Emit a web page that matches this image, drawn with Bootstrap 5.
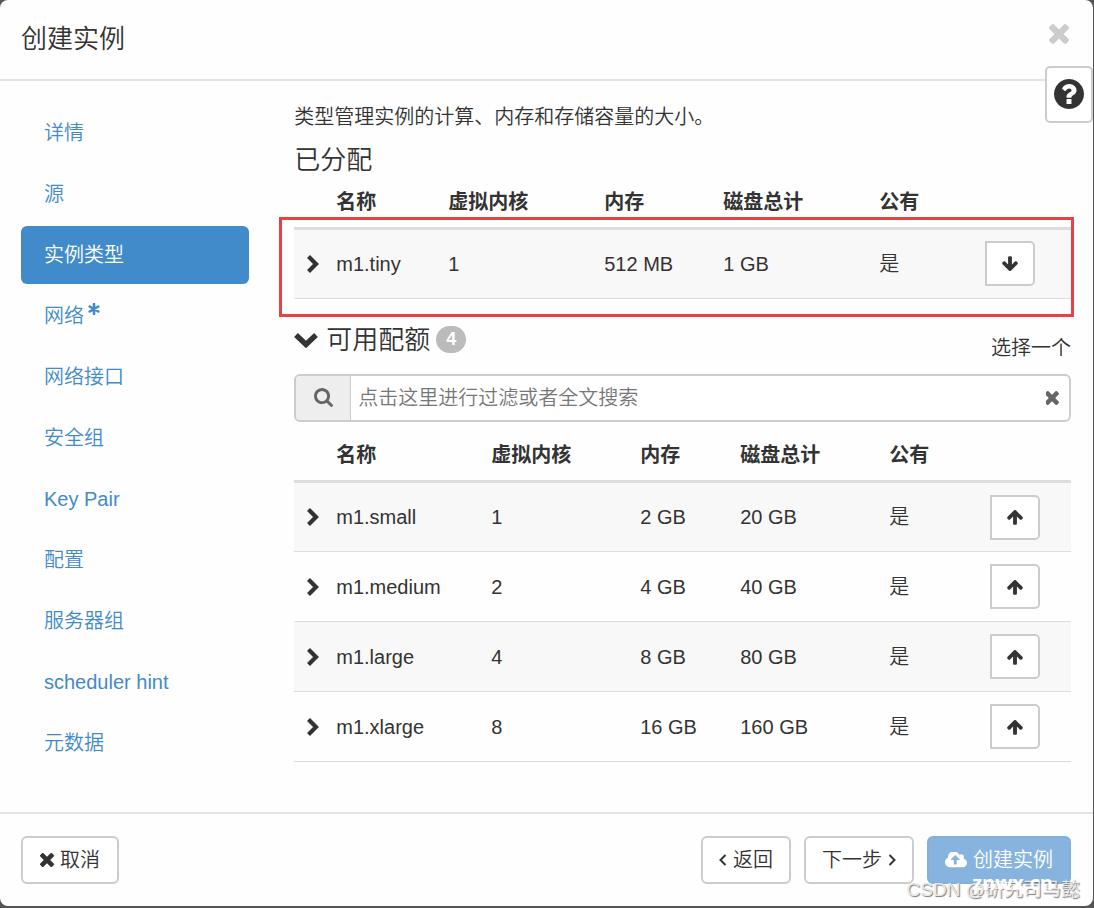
<!DOCTYPE html>
<html lang="zh-CN">
<head>
<meta charset="utf-8">
<meta name="viewport" content="width=device-width, initial-scale=1">
<title>创建实例</title>
<link href="https://cdn.jsdelivr.net/npm/bootstrap@5.3.0/dist/css/bootstrap.min.css" rel="stylesheet">
<style>
  body { font-family: "Liberation Sans", "Noto Sans CJK SC", sans-serif; font-size: 20px; font-weight: 350; line-height: 28px; color: #333; background: #555; }
  .wizard { background: #fefefe; border-radius: 8px; margin: 0 1px 2px 0; min-height: calc(100vh - 2px); }
  .wizard-head { padding: 20px 21px; border-bottom: 2px solid #e3e3e3; }
  .title { font-size: 26px; line-height: 39px; font-weight: 350; }
  .icon { fill: currentColor; display: inline-block; flex: none; }
  .line-icon { fill: none; stroke: currentColor; }
  .plain { background: none; border: 0; padding: 0; color: inherit; line-height: 1; display: inline-flex; }
  .dismiss { color: #ccc; margin: 0 3px 12px 0; }
  .help { position: absolute; top: 66px; right: 0; width: 48px; height: 57px; background: #fff; border: 2px solid #ccc; border-radius: 5px; padding: 0 0 2px; color: #333; }
  .steps { padding: 23px 24px 20px 21px; }
  .steps .nav { gap: 3px; }
  .steps .nav-link { color: #428bca; padding: 15px 23px; border-radius: 6px; }
  .steps .nav-link.active { background: #428bca; color: #fff; }
  .required { vertical-align: 8px; margin-left: 4px; }
  .content { padding: 22px 22px 20px 21px; }
  .subtitle { font-size: 26px; line-height: 36px; font-weight: 350; }
  .assigned { margin: 11px 0 0; }
  .flavors { table-layout: fixed; margin: 0; color: #333; --bs-table-color: #333; --bs-table-striped-color: #333; --bs-table-striped-bg: #f8f8f8; --bs-table-bg: transparent; border-color: #ddd; line-height: 28px; }
  .flavors > :not(caption) > * > * { padding: 0 11px; height: 70px; white-space: nowrap; vertical-align: middle; }
  .flavors > thead > tr > th { font-weight: 700; border-bottom: 3px solid #ddd; }
  .allocated > thead > tr > th { height: 50px; vertical-align: top; padding-top: 10px; }
  .available > thead > tr > th { height: 60px; padding-top: 8px; }
  .flavors > tbody > tr > td:first-child { padding: 0 0 3px 13px; }
  .flavors .plain { vertical-align: middle; }
  .move { display: flex; align-items: center; justify-content: center; width: 50px; height: 45px; background: #fff; border: 2px solid #ccc; border-radius: 0 5px 5px 0; color: #333; padding: 0; }
  .callout { position: relative; }
  .callout::after { content: ""; position: absolute; inset: 39px -3px -18px -15px; border: 3px solid #e84143; pointer-events: none; }
  .available-head { padding-top: 23px; margin-bottom: 12px; }
  .choose { padding-top: 12px; }
  .count { background: #bbb; color: #fff; font-size: 18px; line-height: 27px; border-radius: 14px; padding: 0 10px; font-weight: 700; margin-left: 6px; }
  .search { border: 2px solid #ccc; border-radius: 6px; height: 48px; background: #fff; overflow: hidden; }
  .search .input-group-text { width: 56px; background: #eee; border: 0; border-right: 2px solid #ccc; border-radius: 0; color: #666; justify-content: center; padding: 0; }
  .search .form-control { border: 0; padding: 0 7px; font-size: 20px; font-weight: 350; box-shadow: none; min-width: 0; }
  .search .form-control::placeholder { color: #777; }
  .clear { color: #666; padding-right: 10px; }
  .wizard-foot { border-top: 2px solid #e3e3e3; padding: 22px; padding-left: 21px; }
  .wizard-foot .btn { font-size: 20px; font-weight: 350; line-height: 28px; height: 48px; border: 2px solid #ccc; border-radius: 6px; padding: 0 17px; color: #333; background: #fff; display: inline-flex; align-items: center; gap: 6px; }
  .wizard-foot .forward { gap: 13px; }
  .wizard-foot .forward .btn { padding: 0 16px; }
  .wizard-foot .launch { background: #86b4de; border-color: #82b0db; color: #fff; opacity: 1; }
  .site-mark { position: absolute; right: 40px; bottom: 9px; font-size: 20px; line-height: 28px; font-weight: 700; color: #fff; font-family: "Open Sans", sans-serif; pointer-events: none; }
  .author-mark { position: absolute; right: 13px; bottom: 2px; font-size: 19px; line-height: 28px; color: #e8e8e8; text-shadow: 1px 1px 1px #777; pointer-events: none; white-space: nowrap; }
</style>
</head>
<body>
<svg class="d-none" aria-hidden="true">
  <symbol id="times" viewBox="110 366 1188 1188"><path d="M1298 1322q0 40-28 68l-136 136q-28 28-68 28t-68-28l-294-294-294 294q-28 28-68 28t-68-28l-136-136q-28-28-28-68t28-68l294-294-294-294q-28-28-28-68t28-68l136-136q28-28 68-28t68 28l294 294 294-294q28-28 68-28t68 28l136 136q28 28 28 68t-28 68l-294 294 294 294q28 28 28 68z"/></symbol>
  <symbol id="arrow-up" viewBox="0 0 1792 1792"><path d="M1675 971q0 51-37 90l-75 75q-38 38-91 38-54 0-90-38l-294-293v704q0 52-37.500 84.500t-90.500 32.500h-128q-53 0-90.500-32.500t-37.500-84.500v-704l-294 293q-36 38-90 38t-90-38l-75-75q-38-38-38-90 0-53 38-91l651-651q35-37 90-37 54 0 91 37l651 651q37 39 37 91z"/></symbol>
  <symbol id="arrow-down" viewBox="0 0 1792 1792"><use href="#arrow-up" width="1792" height="1792" transform="rotate(180 896 896)"/></symbol>
  <symbol id="search" viewBox="64 128 1664 1664"><path d="M1216 832q0-185-131.500-316.500t-316.500-131.500-316.500 131.500-131.500 316.500 131.500 316.500 316.500 131.500 316.500-131.500 131.500-316.500zm512 832q0 52-38 90t-90 38q-54 0-90-38l-343-342q-179 124-399 124-143 0-273.500-55.500t-225-150-150-225-55.500-273.500 55.500-273.500 150-225 225-150 273.500-55.500 273.500 55.500 225 150 150 225 55.500 273.500q0 220-124 399l343 343q37 37 37 90z"/></symbol>
  <symbol id="question" viewBox="128 128 1536 1536"><path d="M1024 1376v-192q0-14-9-23t-23-9h-192q-14 0-23 9t-9 23v192q0 14 9 23t23 9h192q14 0 23-9t9-23zm256-672q0-88-55.500-163t-138.500-116-170-41q-243 0-371 213-15 24 8 42l132 100q7 6 19 6 16 0 25-12 53-68 86-92 34-24 86-24 48 0 85.500 26t37.500 59q0 38-20 61t-68 45q-63 28-115.500 86.500t-52.500 125.500v36q0 14 9 23t23 9h192q14 0 23-9t9-23q0-19 21.500-49.500t54.500-49.500q32-18 49-28.500t46-35 44.500-48 28-60.500 12.500-81zm384 192q0 209-103 385.500t-279.500 279.500-385.500 103-385.500-103-279.500-279.500-103-385.500 103-385.500 279.500-279.500 385.500-103 385.500 103 279.500 279.500 103 385.500z"/></symbol>
  <symbol id="cloud" viewBox="-64 256 1920 1280"><path d="M1216 864q0-14-9-23l-352-352q-9-9-23-9t-23 9l-351 351q-10 12-10 24 0 14 9 23t23 9h224v352q0 13 9.500 22.500t22.500 9.500h192q13 0 22.500-9.500t9.500-22.500v-352h224q13 0 22.500-9.500t9.500-22.500zm640 288q0 159-112.500 271.500t-271.500 112.500h-1088q-185 0-316.500-131.500t-131.500-316.500q0-130 70-240t188-165q-2-30-2-43 0-212 150-362t362-150q156 0 285.500 87t188.500 231q71-62 166-62 106 0 181 75t75 181q0 76-41 138 130 31 213.500 135.500t83.500 238.500z"/></symbol>
  <symbol id="chevron" viewBox="0 0 12 18"><path d="M1.500 1.500L9 9l-7.500 7.500" fill="none" stroke="currentColor" stroke-width="4.200"/></symbol>
  <symbol id="chevron-down" viewBox="0 0 24 16"><path d="M2 3l10 9.500L22 3" fill="none" stroke="currentColor" stroke-width="5.400"/></symbol>
  <symbol id="asterisk" viewBox="0 0 12 12"><path d="M6 1v10M1.700 3.500l8.600 5M10.300 3.500l-8.600 5" fill="none" stroke="currentColor" stroke-width="2.600" stroke-linecap="round"/></symbol>
</svg>

<main class="wizard d-flex flex-column position-relative">
  <header class="wizard-head d-flex justify-content-between align-items-center">
    <h1 class="title m-0">创建实例</h1>
    <button class="plain dismiss" type="button" aria-label="关闭"><svg class="icon" width="20" height="20"><use href="#times"/></svg></button>
  </header>
  <button class="help d-flex align-items-center justify-content-center" type="button" aria-label="帮助"><svg class="icon" width="30" height="30"><use href="#question"/></svg></button>

  <div class="row g-0 flex-grow-1">
    <nav class="col-3 steps">
      <div class="nav nav-pills flex-column">
        <a class="nav-link" href="#">详情</a>
        <a class="nav-link" href="#">源</a>
        <a class="nav-link active" href="#" aria-current="page">实例类型</a>
        <a class="nav-link" href="#">网络<svg class="icon required" width="12" height="12"><use href="#asterisk"/></svg></a>
        <a class="nav-link" href="#">网络接口</a>
        <a class="nav-link" href="#">安全组</a>
        <a class="nav-link" href="#">Key Pair</a>
        <a class="nav-link" href="#">配置</a>
        <a class="nav-link" href="#">服务器组</a>
        <a class="nav-link" href="#">scheduler hint</a>
        <a class="nav-link" href="#">元数据</a>
      </div>
    </nav>

    <section class="col-9 content">
      <p class="m-0">类型管理实例的计算、内存和存储容量的大小。</p>
      <h2 class="subtitle assigned">已分配</h2>
      <div class="callout">
        <table class="table table-striped flavors allocated">
          <colgroup><col style="width:31px"><col style="width:112px"><col style="width:156px"><col style="width:119px"><col style="width:156px"><col style="width:106px"><col style="width:97px"></colgroup>
          <thead><tr><th></th><th>名称</th><th>虚拟内核</th><th>内存</th><th>磁盘总计</th><th>公有</th><th></th></tr></thead>
          <tbody>
            <tr><td><button class="plain" type="button" aria-label="展开"><svg class="icon" width="12" height="18"><use href="#chevron"/></svg></button></td><td>m1.tiny</td><td>1</td><td>512 MB</td><td>1 GB</td><td>是</td><td><button class="move" type="button" aria-label="移除"><svg class="icon" width="18" height="18"><use href="#arrow-down"/></svg></button></td></tr>
          </tbody>
        </table>
      </div>

      <div class="available-head d-flex justify-content-between align-items-start">
        <h2 class="subtitle m-0 d-flex align-items-center"><button class="plain me-2" type="button" aria-label="折叠"><svg class="icon" width="24" height="16"><use href="#chevron-down"/></svg></button>可用配额<span class="count">4</span></h2>
        <span class="choose">选择一个</span>
      </div>

      <div class="search input-group flex-nowrap align-items-stretch">
        <label class="input-group-text" for="filter"><svg class="icon" width="19" height="19" aria-label="搜索"><use href="#search"/></svg></label>
        <input class="form-control" id="filter" type="text" placeholder="点击这里进行过滤或者全文搜索">
        <button class="plain clear align-items-center" type="button" aria-label="清除"><svg class="icon" width="14" height="14"><use href="#times"/></svg></button>
      </div>

      <table class="table table-striped flavors available">
        <colgroup><col style="width:31px"><col style="width:155px"><col style="width:149px"><col style="width:100px"><col style="width:149px"><col style="width:101px"><col style="width:92px"></colgroup>
        <thead><tr><th></th><th>名称</th><th>虚拟内核</th><th>内存</th><th>磁盘总计</th><th>公有</th><th></th></tr></thead>
        <tbody>
          <tr><td><button class="plain" type="button" aria-label="展开"><svg class="icon" width="12" height="18"><use href="#chevron"/></svg></button></td><td>m1.small</td><td>1</td><td>2 GB</td><td>20 GB</td><td>是</td><td><button class="move" type="button" aria-label="分配"><svg class="icon" width="18" height="18"><use href="#arrow-up"/></svg></button></td></tr>
          <tr><td><button class="plain" type="button" aria-label="展开"><svg class="icon" width="12" height="18"><use href="#chevron"/></svg></button></td><td>m1.medium</td><td>2</td><td>4 GB</td><td>40 GB</td><td>是</td><td><button class="move" type="button" aria-label="分配"><svg class="icon" width="18" height="18"><use href="#arrow-up"/></svg></button></td></tr>
          <tr><td><button class="plain" type="button" aria-label="展开"><svg class="icon" width="12" height="18"><use href="#chevron"/></svg></button></td><td>m1.large</td><td>4</td><td>8 GB</td><td>80 GB</td><td>是</td><td><button class="move" type="button" aria-label="分配"><svg class="icon" width="18" height="18"><use href="#arrow-up"/></svg></button></td></tr>
          <tr><td><button class="plain" type="button" aria-label="展开"><svg class="icon" width="12" height="18"><use href="#chevron"/></svg></button></td><td>m1.xlarge</td><td>8</td><td>16 GB</td><td>160 GB</td><td>是</td><td><button class="move" type="button" aria-label="分配"><svg class="icon" width="18" height="18"><use href="#arrow-up"/></svg></button></td></tr>
        </tbody>
      </table>
    </section>
  </div>

  <footer class="wizard-foot d-flex justify-content-between">
    <button class="btn" type="button"><svg class="icon" width="14" height="14"><use href="#times"/></svg>取消</button>
    <div class="forward d-flex">
      <button class="btn" type="button"><svg class="line-icon" width="8" height="12" viewBox="0 0 8 12" stroke-width="2"><path d="M6.500 1L1.500 6l5 5"/></svg>返回</button>
      <button class="btn" type="button">下一步<svg class="line-icon" width="8" height="12" viewBox="0 0 8 12" stroke-width="2"><path d="M1.500 1l5 5-5 5"/></svg></button>
      <button class="btn launch" type="button" disabled><svg class="icon" width="22" height="16"><use href="#cloud"/></svg>创建实例</button>
    </div>
  </footer>
  <span class="author-mark">CSDN @研究司马懿</span>
  <span class="site-mark">znwx.cn</span>
</main>
<script src="https://cdn.jsdelivr.net/npm/bootstrap@5.3.0/dist/js/bootstrap.bundle.min.js"></script>
</body>
</html>
